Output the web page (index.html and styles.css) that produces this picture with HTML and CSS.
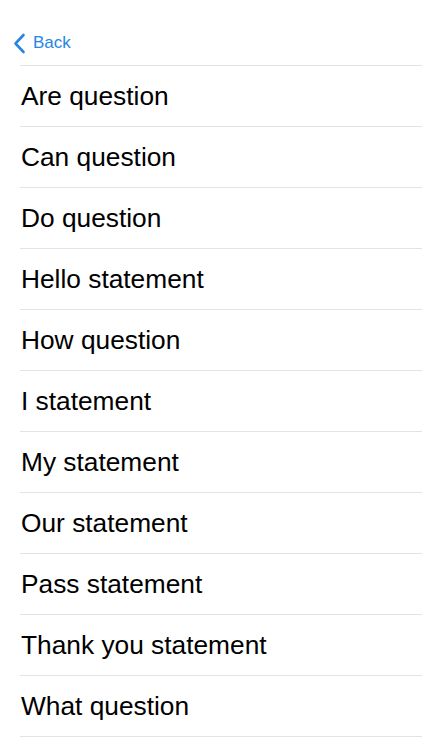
FILE: index.html
```html
<!DOCTYPE html>
<html lang="en">

<head>
    <meta charset="UTF-8">
    <meta name="viewport" content="width=device-width, initial-scale=1.0">
    <title>Phrases</title>
    <link rel="stylesheet" href="styles.css">
</head>

<body>
    <div class="nav">
        <a class="nav-back" href="">
            <svg class="nav-back-icon" width="13" height="21" viewBox="0 0 13 21">
                <path d="M10.5 2 L2.5 10.5 L10.5 19" fill="none" stroke="#2686e4" stroke-width="2.6" stroke-linecap="round" stroke-linejoin="round"/>
            </svg>
            <span>Back</span>
        </a>
    </div>
    <ul class="list">
        <li class="list-item">Are question</li>
        <li class="list-item">Can question</li>
        <li class="list-item">Do question</li>
        <li class="list-item">Hello statement</li>
        <li class="list-item">How question</li>
        <li class="list-item">I statement</li>
        <li class="list-item">My statement</li>
        <li class="list-item">Our statement</li>
        <li class="list-item">Pass statement</li>
        <li class="list-item">Thank you statement</li>
        <li class="list-item">What question</li>
    </ul>
</body>

</html>
```

FILE: styles.css
```css
* {
    margin: 0;
    padding: 0;
}

body {
    background: #fff;
    font-family: "Liberation Sans", Arial, sans-serif;
    color: #000;
}

.nav {
    height: 66px;
    display: flex;
    align-items: center;
    padding-top: 21px;
    box-sizing: border-box;
    border-bottom: 1px solid #e3e3e3;
    margin-left: 20px;
}

.nav-back {
    display: flex;
    align-items: center;
    color: #2686e4;
    text-decoration: none;
    font-size: 17px;
    margin-left: -7px;
}

.nav-back-icon {
    margin-right: 7px;
}

.list {
    list-style: none;
    margin-left: 20px;
}

.list-item {
    height: 60px;
    line-height: 60px;
    font-size: 26.3px;
    padding-left: 1px;
    border-bottom: 1px solid #e3e3e3;
}
```
